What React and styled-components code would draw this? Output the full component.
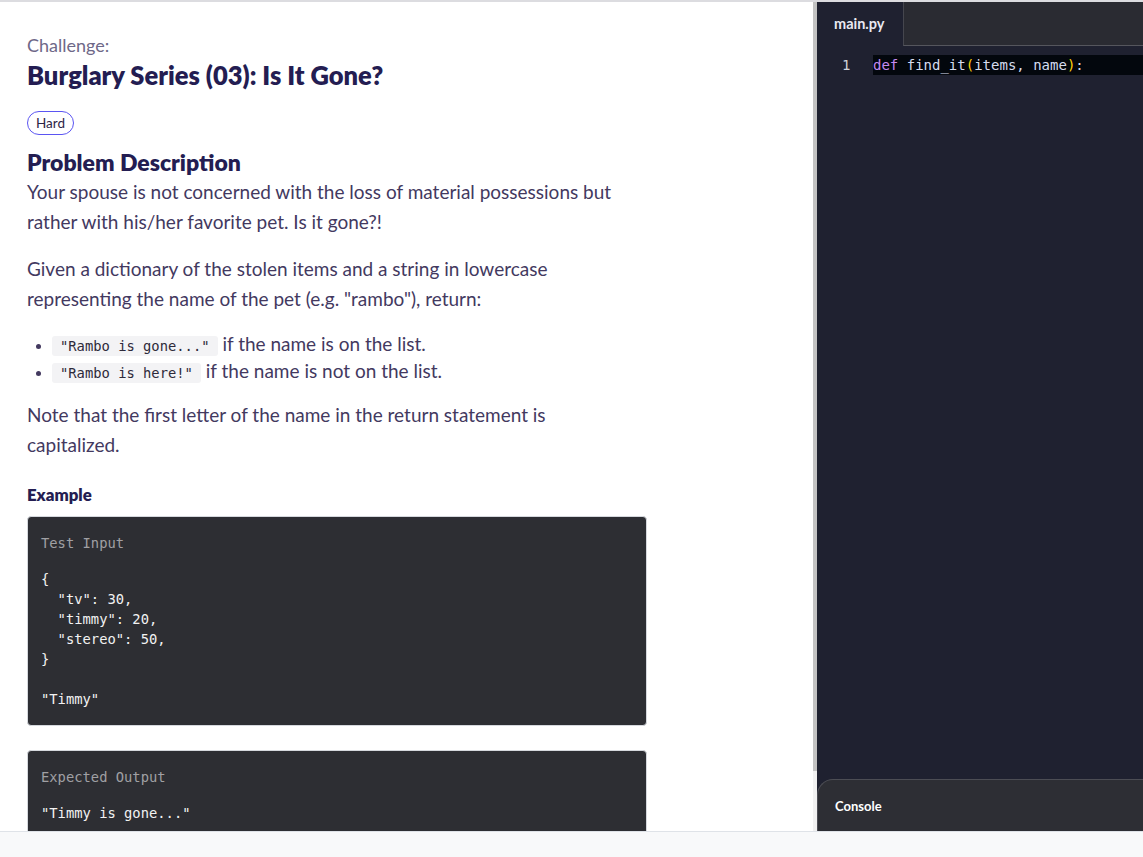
import React from 'react';
import styled, { createGlobalStyle } from 'styled-components';

const GlobalStyle = createGlobalStyle`
html, body {
    margin: 0;
    padding: 0;
    height: 100%;
    overflow: hidden;
    background: #ffffff;
}
#root {
    height: 100%;
}
* {
    box-sizing: border-box;
}
`;

export default function App() {
    return (
        <Page>
            <GlobalStyle />
            <Main>
                <Problem>
                    <Content>
                        <Label>Challenge:</Label>
                        <Title>Burglary Series (03): Is It Gone?</Title>
                        <Pill>Hard</Pill>
                        <SectionTitle>Problem Description</SectionTitle>
                        <Para top={1}>
                            Your spouse is not concerned with the loss of material possessions but
                            rather with his/her favorite pet. Is it gone?!
                        </Para>
                        <Para top={17}>
                            Given a dictionary of the stolen items and a string in lowercase
                            representing the name of the pet (e.g. "rambo"), return:
                        </Para>
                        <List>
                            <li><Code>"Rambo is gone..."</Code> if the name is on the list.</li>
                            <li><Code>"Rambo is here!"</Code> if the name is not on the list.</li>
                        </List>
                        <Para top={16}>
                            Note that the first letter of the name in the return statement is
                            capitalized.
                        </Para>
                        <SubTitle>Example</SubTitle>
                        <Block top={11}>
                            <BlockHead>Test Input</BlockHead>
                            <Pre>{`{
  "tv": 30,
  "timmy": 20,
  "stereo": 50,
}

"Timmy"`}</Pre>
                        </Block>
                        <Block top={24}>
                            <BlockHead>Expected Output</BlockHead>
                            <Pre>{`"Timmy is gone..."`}</Pre>
                        </Block>
                    </Content>
                </Problem>
                <ScrollTrack>
                    <ScrollThumb />
                </ScrollTrack>
                <Editor>
                    <Tabs>
                        <Tab>main.py</Tab>
                        <TabFill />
                    </Tabs>
                    <CodeArea>
                        <CodeLine>
                            <LineNo>1</LineNo>
                            <LineText>
                                <Kw>def</Kw> find_it<Br>(</Br>items, name<Br>)</Br>:
                            </LineText>
                        </CodeLine>
                    </CodeArea>
                    <Console>
                        <ConsoleTitle>Console</ConsoleTitle>
                    </Console>
                </Editor>
            </Main>
            <BottomBar />
        </Page>
    )
}

const Page = styled.div`
height: 857px;
display: flex;
flex-direction: column;
border-top: 2px solid #dcdce0;
font-family: Lato, "Noto Sans", sans-serif;
`;

const Main = styled.div`
flex: 1;
display: flex;
min-height: 0;
`;

const Problem = styled.div`
width: 813px;
overflow: hidden;
background: #ffffff;
`;

const Content = styled.div`
width: 620px;
margin-left: 27px;
padding-top: 33px;
`;

const Label = styled.div`
font-size: 18px;
line-height: 20px;
color: #6e6888;
`;

const Title = styled.h1`
margin: 5px 0 0;
font-size: 25.5px;
line-height: 30px;
font-weight: 800;
color: #241d52;
`;

const Pill = styled.span`
display: inline-flex;
align-items: center;
height: 24px;
margin-top: 21px;
padding: 0 8px;
border: 1.5px solid #5b55f2;
border-radius: 12px;
font-size: 13.5px;
color: #2d2545;
`;

const SectionTitle = styled.h2`
margin: 13px 0 0;
font-size: 23px;
line-height: 28px;
font-weight: 800;
color: #241d52;
`;

const Para = styled.p`
max-width: 605px;
margin: ${p => p.top}px 0 0;
font-size: 19px;
line-height: 30px;
color: #43395f;
`;

const List = styled.ul`
margin: 16px 0 0;
padding-left: 25px;
font-size: 19px;
line-height: 27px;
color: #43395f;
li::marker {
    font-size: 14px;
}
`;

const Code = styled.code`
display: inline-block;
padding: 0 8px;
line-height: 20px;
background: #f3f3f5;
border-radius: 3px;
font-family: "DejaVu Sans Mono", monospace;
font-size: 13.8px;
color: #2e2a3a;
`;

const SubTitle = styled.h3`
margin: 25px 0 0;
font-size: 16.8px;
line-height: 20px;
font-weight: 800;
color: #241d52;
`;

const Block = styled.div`
margin-top: ${p => p.top}px;
padding: 16px 13px;
background: #2d2e33;
border: 1px solid #d5d8dd;
border-radius: 4px;
font-family: "DejaVu Sans Mono", monospace;
font-size: 13.8px;
line-height: 20px;
`;

const BlockHead = styled.div`
color: #a0a0a4;
margin-bottom: 16px;
`;

const Pre = styled.pre`
margin: 0;
font-family: inherit;
color: #f2f2f2;
`;

const ScrollTrack = styled.div`
width: 4px;
background: #f1f1f1;
display: flex;
flex-direction: column;
`;

const ScrollThumb = styled.div`
height: 769px;
background: #c3c3c3;
`;

const Editor = styled.div`
flex: 1;
display: flex;
flex-direction: column;
background: #1f2130;
min-width: 0;
`;

const Tabs = styled.div`
height: 44px;
display: flex;
`;

const Tab = styled.div`
width: 86px;
display: flex;
align-items: center;
padding-left: 17px;
padding-bottom: 2px;
font-size: 14.5px;
font-weight: 700;
color: #e9e9f2;
`;

const TabFill = styled.div`
flex: 1;
background: #2a2b32;
border-left: 1px solid #45464e;
border-bottom: 1px solid #55565d;
`;

const CodeArea = styled.div`
flex: 1;
padding-top: 9px;
`;

const CodeLine = styled.div`
display: flex;
height: 20px;
font-family: "DejaVu Sans Mono", monospace;
font-size: 14px;
line-height: 20px;
`;

const LineNo = styled.span`
width: 56px;
padding-left: 25px;
color: #cfd2da;
`;

const LineText = styled.span`
flex: 1;
background: #03070d;
color: #d6dcef;
white-space: pre;
`;

const Kw = styled.span`
color: #c58af0;
`;

const Br = styled.span`
color: #ffd20a;
`;

const Console = styled.div`
height: 52px;
display: flex;
align-items: center;
padding-left: 17px;
background: #2d2e34;
border-top: 1px solid #4c4d54;
border-left: 1px solid #4c4d54;
border-top-left-radius: 16px;
`;

const ConsoleTitle = styled.span`
font-size: 13px;
font-weight: 700;
color: #ffffff;
`;

const BottomBar = styled.div`
height: 26px;
background: #f8f9fa;
border-top: 1px solid #dfe3e8;
`;
